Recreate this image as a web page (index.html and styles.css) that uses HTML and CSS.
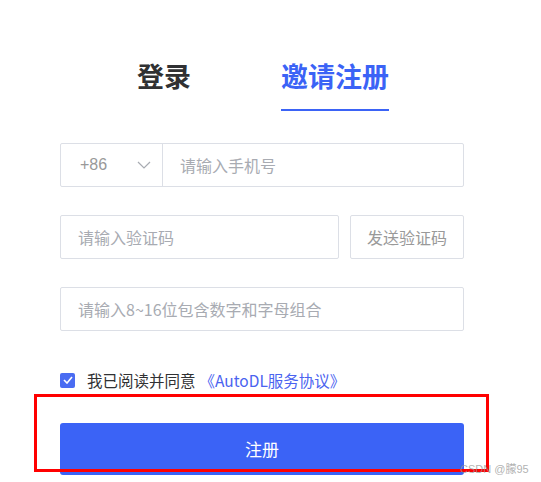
FILE: index.html
```html
<!DOCTYPE html>
<html lang="zh">
<head>
<meta charset="utf-8">
<title>注册</title>
<link rel="stylesheet" href="styles.css">
</head>
<body>
<div class="page">
  <div class="tabs">
    <div class="tab">登录</div>
    <div class="tab active">邀请注册</div>
  </div>
  <div class="field phone">
    <div class="cc">
      <span class="cc-text">+86</span>
      <svg class="chev" width="14" height="8" viewBox="0 0 14 8"><path d="M1 1 L7 7 L13 1" fill="none" stroke="#a8abb2" stroke-width="1.2"/></svg>
    </div>
    <div class="ph phone-ph">请输入手机号</div>
  </div>
  <div class="row code-row">
    <div class="field code"><div class="ph">请输入验证码</div></div>
    <div class="send">发送验证码</div>
  </div>
  <div class="field pwd"><div class="ph">请输入8~16位包含数字和字母组合</div></div>
  <div class="agree">
    <span class="check"><svg width="10" height="8" viewBox="0 0 10 8"><path d="M1 4 L4 7 L9 1" fill="none" stroke="#fff" stroke-width="1.6"/></svg></span>
    <span class="agree-text">我已阅读并同意</span><span class="link">《AutoDL服务协议》</span>
  </div>
  <div class="submit">注册</div>
</div>
<div class="mark"></div>
<div class="wm">CSDN @朦95</div>
</body>
</html>
```
FILE: styles.css
```css
* { box-sizing: border-box; }
html, body { margin: 0; padding: 0; background: #fff; }
body {
  font-family: "Microsoft YaHei", "Noto Sans CJK SC", "Liberation Sans", sans-serif;
  width: 541px; height: 482px; overflow: hidden; position: relative;
}
.page {
  padding: 60px 0 0 60px;
  width: 464px;
  display: flex; flex-direction: column;
}
.tabs {
  display: flex; gap: 90px; padding-left: 77px;
}
.tab {
  font-size: 27px; font-weight: 700; line-height: 31px; color: #303133;
  padding-bottom: 18px; border-bottom: 2px solid transparent;
}
.tab.active { color: #3b63f6; border-bottom-color: #3b63f6; }
.field {
  border: 1px solid #dcdfe6; border-radius: 2px; height: 44px;
  display: flex; align-items: center;
}
.phone { margin-top: 32px; width: 404px; }
.cc {
  width: 102px; height: 100%; border-right: 1px solid #dcdfe6;
  display: flex; align-items: center; padding-left: 19px;
}
.cc-text { font-family: "Liberation Sans", sans-serif; font-size: 16px; color: #999; width: 57px; }
.chev { display: block; }
.ph { font-size: 16px; color: #a8abb2; padding-left: 17px; white-space: nowrap; }
.phone-ph { padding-left: 17px; }
.row { display: flex; gap: 11px; margin-top: 28px; }
.code { width: 279px; }
.send {
  width: 114px; height: 44px; border: 1px solid #dcdfe6; border-radius: 2px;
  display: flex; align-items: center; justify-content: center;
  font-size: 16px; color: #999;
}
.pwd { margin-top: 28px; width: 404px; }
.agree {
  margin-top: 40px; height: 18px; display: flex; align-items: center;
  font-size: 15.5px; color: #303133;
}
.check {
  width: 15px; height: 15px; background: #4a6cf2; border-radius: 2px;
  display: flex; align-items: center; justify-content: center; margin-right: 12px;
}
.check svg { display: block; }
.link { color: #4a63f0; margin-left: 4px; }
.submit {
  margin-top: 34px; width: 404px; height: 52px; background: #3b63f6;
  border-radius: 3px; color: #fff; font-size: 17px;
  display: flex; align-items: center; justify-content: center;
  padding-bottom: 2px;
}
.mark {
  position: absolute; left: 34px; top: 394px; width: 455px; height: 78px;
  border: 3px solid #ff0000;
}
.wm {
  position: absolute; left: 460px; top: 460px;
  font-family: "Liberation Sans", "Noto Sans CJK SC", sans-serif;
  font-size: 11px; color: rgba(150,150,150,0.75);
}
```
